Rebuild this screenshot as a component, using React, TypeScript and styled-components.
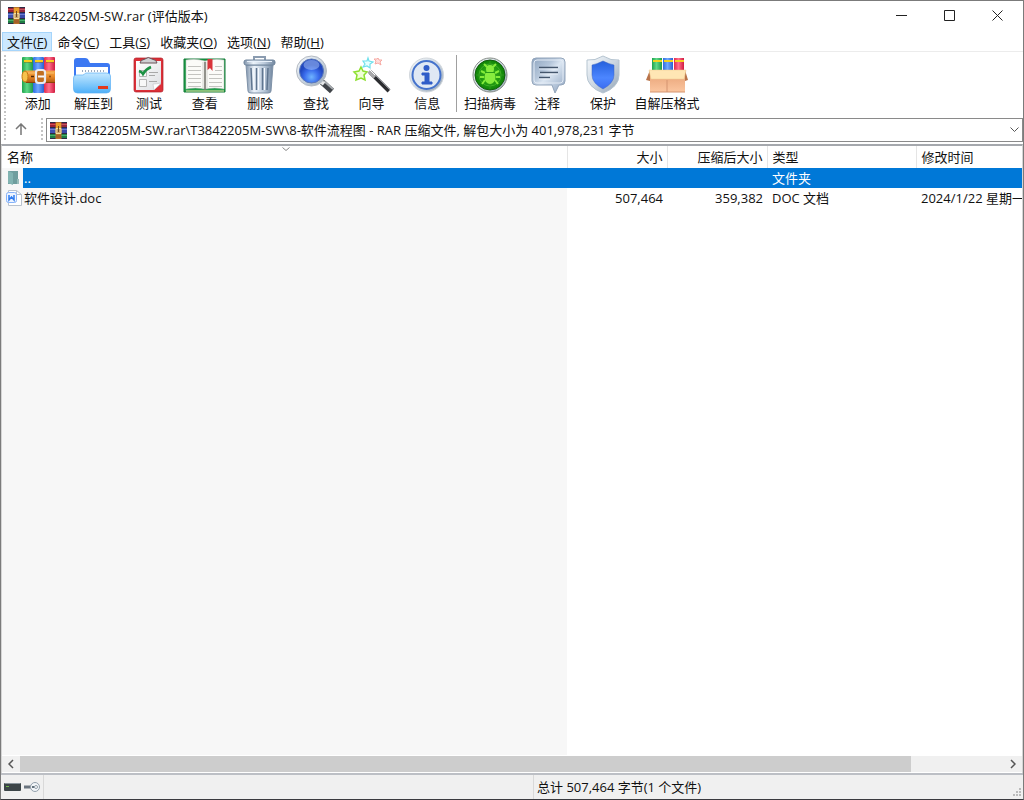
import React from "react";
import styled, { createGlobalStyle } from "styled-components";

const GlobalStyle = createGlobalStyle`
  *, *::before, *::after { box-sizing: border-box; }
  body { margin: 0; background: #fff; }
  body, button, input, table {
    font-family: "Open Sans", "Noto Sans CJK SC", sans-serif;
    font-size: 13px;
    line-height: 20px;
    color: #111;
  }
  button { border: 0; padding: 0; background: transparent; }
  svg { display: block; flex: none; }
`;

const Window = styled.div`
  display: flex;
  flex-direction: column;
  height: 100vh;
  min-height: 320px;
  overflow: hidden;
  border: 1px solid #7b7b7b;
  border-bottom-color: #3a3a3f;
  background: #fff;
`;

const TitleBar = styled.header`
  display: flex;
  align-items: center;
  flex: none;
  height: 31px;
  padding: 0 2px 2px 7px;
`;

const Title = styled.h1`
  flex: 1;
  margin: 0 0 0 4px;
  font-size: 13px;
  font-weight: 400;
  line-height: 20px;
  white-space: nowrap;
`;

const CaptionButton = styled.button`
  display: grid;
  place-items: center;
  width: 48px;
  height: 29px;
`;

const MenuBar = styled.nav`
  display: flex;
  flex: none;
  height: 20px;
  padding-left: 1px;
  border-bottom: 1px solid #ececec;
`;

const MenuButton = styled.button<{ $active?: boolean }>`
  height: 19px;
  padding: 2px 5px 0;
  line-height: 17px;
  white-space: nowrap;
  background: ${(p) => (p.$active ? "#cce8ff" : "transparent")};
  box-shadow: ${(p) => (p.$active ? "inset 0 0 0 1px #a6d5fb" : "none")};
`;

const Grip = styled.span`
  flex: none;
  width: 2px;
  background: repeating-linear-gradient(#c4c4c4 0 2px, transparent 2px 4px);
`;

const ToolBar = styled.div`
  display: flex;
  flex: none;
  height: 64px;
  padding: 3px 0 0 3px;
`;

const MainTools = styled.div`
  display: grid;
  grid-template-columns: repeat(8, 1fr);
  width: 445px;
  margin-left: 4px;
`;

const ToolDivider = styled.span`
  width: 1px;
  height: 57px;
  margin: 0 4px 0 1px;
  background: #a0a0a0;
`;

const ToolButton = styled.button`
  display: flex;
  flex-direction: column;
  align-items: center;
  line-height: 16px;
  white-space: nowrap;
`;

const ExtraTools = styled.div`
  display: grid;
  grid-template-columns: 58px 56px 56px 72px;
`;

const AddressRow = styled.div`
  display: flex;
  flex: none;
  height: 28px;
  padding: 2px 0 2px 3px;
`;

const UpButton = styled.button`
  display: grid;
  place-items: center;
  width: 35px;
  height: 22px;
  padding-right: 6px;
`;

const AddressBox = styled.label`
  display: flex;
  align-items: center;
  flex: 1;
  min-width: 0;
  height: 24px;
  margin-left: 3px;
  padding: 0 3px 0 3px;
  border: 1px solid #8a8a8a;
`;

const AddressInput = styled.input`
  flex: 1;
  min-width: 0;
  height: 20px;
  margin-left: 3px;
  padding: 0;
  border: 0;
  outline: 0;
  background: transparent;
`;

const FilePane = styled.main`
  display: flex;
  flex-direction: column;
  flex: 1;
  min-height: 0;
  border-top: 2px solid #a5a8ad;
  border-left: 1px solid #d5d5d5;
  border-right: 1px solid #d5d5d5;
`;

const TableArea = styled.div`
  position: relative;
  flex: 1;
  min-height: 0;
  overflow: hidden;
`;

const FileTable = styled.table`
  width: 100%;
  height: 100%;
  table-layout: fixed;
  border-collapse: collapse;
`;

const Column = styled.col<{ $width?: number }>`
  width: ${(p) => (p.$width ? `${p.$width}px` : "auto")};
`;

const HeadCell = styled.th<{ $right?: boolean }>`
  height: 22px;
  padding: 0 4px 0 5px;
  border-right: 1px solid #e5e5e5;
  font-weight: 400;
  text-align: ${(p) => (p.$right ? "right" : "left")};
  white-space: nowrap;
  &:last-child { border-right: 0; }
`;

const Row = styled.tr<{ $selected?: boolean }>`
  height: 20px;
  color: ${(p) => (p.$selected ? "#fff" : "#111")};
  td:nth-child(n + 2) {
    background: ${(p) => (p.$selected ? "#0078d7" : "transparent")};
  }
`;

const Cell = styled.td<{ $right?: boolean }>`
  height: 20px;
  padding: 0 4px 0 5px;
  text-align: ${(p) => (p.$right ? "right" : "left")};
  white-space: nowrap;
`;

const NameCell = styled.td`
  height: 20px;
  padding: 0;
  background: #f7f7f7;
`;

const NameContent = styled.div`
  display: flex;
  align-items: center;
  height: 20px;
  padding-left: 3px;
`;

const NameText = styled.span<{ $selected?: boolean }>`
  flex: 1;
  height: 20px;
  padding-left: 1px;
  background: ${(p) => (p.$selected ? "#0078d7" : "transparent")};
`;

const Filler = styled.td`
  background: #f7f7f7;
`;

const SortMark = styled.svg`
  position: absolute;
  top: 0;
  left: 280px;
`;

const ScrollBar = styled.div`
  display: grid;
  grid-template-columns: 18px 1fr 18px;
  flex: none;
  height: 18px;
  border-top: 1px solid #fff;
  border-bottom: 1px solid #fff;
  background: #f0f0f0;
`;

const ScrollButton = styled.button`
  display: grid;
  place-items: center;
`;

const Thumb = styled.div`
  height: 100%;
  background: #cdcdcd;
`;

const StatusBar = styled.footer`
  display: grid;
  grid-template-columns: 43px 490px 1fr auto;
  flex: none;
  height: 26px;
  border-top: 2px solid #bcbfc5;
  background: #f0f0f0;
`;

const StatusPane = styled.div`
  display: flex;
  align-items: center;
  gap: 2px;
  padding-left: 3px;
  border-right: 1px solid #d9d9d9;
  white-space: nowrap;
  &:nth-child(n + 3) { border-right: 0; }
`;

const ResizeCorner = styled.svg`
  align-self: end;
`;

const BookStack = () => (
  <svg width="17" height="17" viewBox="0 0 17 17" aria-hidden="true">
    <path d="M0 0h17v17H0z" fill="#2c2a45" />
    <path d="M0 1h6v4H0z" fill="#9c2136" />
    <path d="M0 2h6v1H0z" fill="#cf4a50" />
    <path d="M11 1h6v4h-6z" fill="#96283e" />
    <path d="M11 2h6v1h-6z" fill="#c4545e" />
    <path d="M0 6h6v5H0z" fill="#3f51b0" />
    <path d="M0 7h6v1H0z" fill="#7084d6" />
    <path d="M11 6h6v5h-6z" fill="#3a4aa8" />
    <path d="M11 7h6v1h-6z" fill="#6b7dd0" />
    <path d="M0 12h6v4H0z" fill="#1f7d45" />
    <path d="M0 13h6v1H0z" fill="#48b06a" />
    <path d="M11 12h6v4h-6z" fill="#1f7d45" />
    <path d="M11 13h6v1h-6z" fill="#48b06a" />
    <path d="M5.500 0h6v17h-6z" fill="#b8742a" />
    <path d="M6 1h5v5H6z" fill="#eaa02c" />
    <path d="M6 6.500h5v5H6z" fill="#c9a46a" stroke="#f3e0a0" />
    <path d="M8 4h1v6H8z" fill="#6e4a24" />
    <path d="M6 13h5v3H6z" fill="#a5602a" />
  </svg>
);

const Art = ({ children }: { children: React.ReactNode }) => (
  <svg width="44" height="40" viewBox="0 0 44 40" aria-hidden="true">{children}</svg>
);

const Definitions = styled.svg`
  position: absolute;
`;

const Gradients = () => (
  <Definitions width="0" height="0" aria-hidden="true">
    <defs>
      <linearGradient id="green"><stop offset="0" stopColor="#1fa34c" /><stop offset=".45" stopColor="#5fd887" /><stop offset="1" stopColor="#1f9a4a" /></linearGradient>
      <linearGradient id="blue"><stop offset="0" stopColor="#2d6be0" /><stop offset=".45" stopColor="#6fa8ff" /><stop offset="1" stopColor="#2a60d0" /></linearGradient>
      <linearGradient id="red"><stop offset="0" stopColor="#e02a4c" /><stop offset=".45" stopColor="#ff6f8c" /><stop offset="1" stopColor="#d01c40" /></linearGradient>
      <linearGradient id="belt" x2="0" y2="1"><stop offset="0" stopColor="#f5a848" /><stop offset=".5" stopColor="#e98a28" /><stop offset="1" stopColor="#b3590e" /></linearGradient>
      <linearGradient id="folder" x2="0" y2="1"><stop offset="0" stopColor="#c4e8ff" /><stop offset="1" stopColor="#4fb0f8" /></linearGradient>
      <linearGradient id="page" x2="1" y2="1"><stop offset="0" stopColor="#fff" /><stop offset="1" stopColor="#dcdee2" /></linearGradient>
      <linearGradient id="steel"><stop offset="0" stopColor="#7f93ab" /><stop offset=".3" stopColor="#edf4fb" /><stop offset=".65" stopColor="#bccbdc" /><stop offset="1" stopColor="#71869f" /></linearGradient>
      <linearGradient id="silver" x2="1" y2="1"><stop offset="0" stopColor="#f7fafc" /><stop offset=".5" stopColor="#ccd7e2" /><stop offset="1" stopColor="#93a3b4" /></linearGradient>
      <linearGradient id="bubble" x2="1" y2="1"><stop offset="0" stopColor="#8fa5c0" /><stop offset=".35" stopColor="#b5c6da" /><stop offset=".5" stopColor="#dbe6f2" /><stop offset="1" stopColor="#8aa0bd" /></linearGradient>
      <linearGradient id="shield" x2="0" y2="1"><stop offset="0" stopColor="#2560dc" /><stop offset=".6" stopColor="#4c86ff" /><stop offset="1" stopColor="#3a6cf0" /></linearGradient>
      <linearGradient id="box" x2="0" y2="1"><stop offset="0" stopColor="#e59d70" /><stop offset="1" stopColor="#fbc6a0" /></linearGradient>
      <radialGradient id="lens" cx=".5" cy=".75"><stop offset="0" stopColor="#6fb4ff" /><stop offset=".6" stopColor="#3a6cec" /><stop offset="1" stopColor="#2148c0" /></radialGradient>
      <radialGradient id="scan"><stop offset="0" stopColor="#3fc01c" /><stop offset="1" stopColor="#0e8208" /></radialGradient>
    </defs>
  </Definitions>
);

const AddIcon = () => (
  <Art>
    <rect x="6" y="2" width="11" height="36" rx="1" fill="url(#green)" />
    <rect x="17" y="2" width="11" height="36" rx="1" fill="url(#blue)" />
    <rect x="28" y="2" width="11" height="36" rx="1" fill="url(#red)" />
    <path d="M8 6h8M19 6h8M30 6h8" stroke="#f9cf1c" strokeWidth="2" />
    <path d="M8 7.500h8M19 7.500h8M30 7.500h8" stroke="#8a6a18" strokeWidth=".5" />
    <path d="M10 15.500h29v12H10q-4-1-4-6t4-6" fill="url(#belt)" />
    <path d="M10 27.500h29" stroke="#8a4208" />
    <ellipse cx="9" cy="21.500" rx="3" ry="5.500" fill="#f7c24c" stroke="#c47a14" />
    <path d="M12 18h26" stroke="#ffcf85" strokeWidth=".7" />
    <rect x="20" y="15" width="9" height="13" rx="2.500" fill="#c06f22" stroke="#e9ebf0" strokeWidth="2.200" />
    <path d="M22 21.500h6" stroke="#fafafa" strokeWidth="2" />
    <path d="M15 21.500h3" stroke="#4a2608" strokeWidth="1.500" />
    <circle cx="34" cy="21.500" r="1" fill="#8a4a10" />
  </Art>
);

const ExtractIcon = () => (
  <Art>
    <path d="M3 33V6q0-3 3-3h8q3 0 4 3l1 2h17q3 0 3 3v22z" fill="#3c78f2" />
    <path d="M5 12h32v16H5z" fill="#fff" />
    <path d="M11 16h23" stroke="#9cabc0" strokeDasharray="1 2" strokeWidth="2" />
    <path d="M2.500 23q0-3 3-3h6q2 0 3-2h21q4 0 4 3v13q0 4-4 4h-29q-4 0-4-4z" fill="url(#folder)" stroke="#5cb0f5" strokeWidth=".7" />
    <rect x="27" y="31" width="10" height="3" fill="#e23a1e" />
  </Art>
);

const TestIcon = () => (
  <Art>
    <rect x="7" y="3" width="29" height="34" rx="2" fill="#dc3038" stroke="#b3202a" strokeWidth=".7" />
    <path d="M9 6h25v23l-7 6H9z" fill="url(#page)" />
    <path d="M34 28q-4 1-8 1l1 6z" fill="#fff" stroke="#b6b8bc" strokeWidth=".5" />
    <path d="M13 8q0-3 5-4 3-3 7 0 5 1 5 4z" fill="#cfd0d4" stroke="#6a5258" />
    <path d="M12.500 15.500h7v6h-7zM12.500 24.500h7v7h-7z" fill="#f8f8f8" stroke="#b5b5b5" />
    <path d="M12 16q3 1 4 3 3-5 8-7" fill="none" stroke="#1c9144" strokeWidth="2.500" />
    <path d="M22 17.500h9M22 20.500h6M22 26.500h8" stroke="#a8a8a8" />
  </Art>
);

const ViewIcon = () => (
  <Art>
    <path d="M1 4h41v33H1z" fill="#1f9e48" stroke="#117a36" />
    <path d="M3 5q10-2 19 1v28q-10-2-19 0zM22 6q10-3 19-1v29q-9-2-19 0z" fill="#fbfbf8" stroke="#bbb" strokeWidth=".5" />
    <path d="M3 36h38" stroke="#f5e8b0" />
    <path d="M22 7v28" stroke="#77776f" strokeWidth="1.500" />
    <path d="M20 7v27M24 7v27" stroke="#d5d5d0" />
    <path d="M5 11.500h13M5 15.500h13M5 19.500h13M5 23.500h13M5 27.500h13M5 31.500h13M26 19.500h13M26 23.500h13M26 27.500h13M26 31.500h13M32 11.500h7M32 15.500h7" stroke="#c4c4c0" />
    <path d="M24.500 4h5v12l-2.500-3-2.500 2z" fill="#d9343a" />
  </Art>
);

const DeleteIcon = () => (
  <Art>
    <path d="M16 6V2h11v4" fill="none" stroke="#8b9cb0" strokeWidth="2" />
    <path d="M8 10h27l-2 26q0 2-3 2H13q-3 0-3-2z" fill="url(#steel)" stroke="#7f92a8" />
    <path d="M13 13l1 22M18.500 13v22M24.500 13v22M30 13l-1 22" stroke="#5f758f" strokeWidth="1.500" />
    <path d="M15 13l1 22M20.500 13v22M26.500 13v22" stroke="#f6faff" />
    <rect x="6" y="5" width="31" height="5" rx="2" fill="url(#steel)" stroke="#6f849c" />
    <path d="M9 6.500h25" stroke="#e8f1fb" />
  </Art>
);

const FindIcon = () => (
  <Art>
    <path d="M28 27l10 9" stroke="#3f4348" strokeWidth="6" /><path d="M30 26l9 8" stroke="#a6aaae" strokeWidth="2" />
    <path d="M26 26l4 3" stroke="#e6e8ea" strokeWidth="4" />
    <circle cx="17.500" cy="16" r="15" fill="url(#silver)" stroke="#b4bac2" />
    <circle cx="17.500" cy="16" r="12" fill="url(#lens)" stroke="#5b78b8" />
    <ellipse cx="17.500" cy="10" rx="8" ry="5" fill="#bdd8ff" opacity=".45" />
  </Art>
);

const WizardIcon = () => (
  <Art>
    <path d="M11 12l2 4 4 1-3 3 1 5-4-2-5 2 1-5-3-3 5-1z" fill="#efffd5" stroke="#8de02e" strokeWidth="1.500" />
    <path d="M18 3l1 3 4 1-3 2v4l-3-2-4 1 2-3-2-3h4z" fill="#e6ffff" stroke="#6fe0ec" strokeWidth="1.200" />
    <path d="M28 3l1 2h3l-2 2 1 3-3-2-3 1 1-3-2-2h3z" fill="#ffe0dd" stroke="#f6aaa4" />
    <path d="M20 17l19 19" stroke="#2c2d30" strokeWidth="4" /><path d="M21 16l19 19" stroke="#8b8e94" />
    <path d="M19 16l6 6" stroke="#a8a8aa" strokeWidth="4" /><path d="M20 15l5 5" stroke="#fff" />
  </Art>
);

const InfoIcon = () => (
  <Art>
    <circle cx="21.500" cy="20" r="17" fill="url(#silver)" stroke="#d2d7dc" />
    <circle cx="21.500" cy="20" r="14" fill="#dfe8f4" stroke="#4472cc" strokeWidth="2" />
    <circle cx="21.500" cy="13" r="3" fill="#2f5cc8" />
    <path d="M17 18h7v9h3v2H17v-2h3v-7h-3z" fill="#2f5cc8" stroke="#2f5cc8" />
  </Art>
);

const ScanIcon = () => (
  <Art>
    <circle cx="22" cy="20" r="17" fill="url(#silver)" stroke="#858c86" />
    <circle cx="22" cy="20" r="15" fill="url(#scan)" stroke="#125c0c" />
    <circle cx="22" cy="20" r="11" fill="none" stroke="#3fae28" /><path d="M22 6v28M8 20h28" stroke="#2c951c" />
    <path d="M19 12l-3-3M25 12l3-3M17 18l-4-2M27 18l4-2M16 22h-4M28 22h4M17 25l-3 4M27 25l3 4" stroke="#84eb39" strokeWidth="2" />
    <ellipse cx="22" cy="22" rx="5.500" ry="7" fill="#86ec3e" /><circle cx="22" cy="14" r="4" fill="#86ec3e" />
    <path d="M17 17.500h10" stroke="#299a18" />
  </Art>
);

const CommentIcon = () => (
  <Art>
    <path d="M11 3h25q4 0 4 4v19q0 4-4 4h-2l-4 8-3-8H11q-4 0-4-4V7q0-4 4-4z" fill="url(#bubble)" stroke="#93a5bb" />
    <rect x="9" y="5" width="29" height="23" rx="3" fill="none" stroke="#e3ebf5" />
    <path d="M14 12.500h19M15 17.500h18M14 22.500h11" stroke="#44566c" strokeWidth="1.500" />
    <path d="M14 14h19M15 19h18M14 24h11" stroke="#f2f7fc" strokeWidth=".7" />
  </Art>
);

const ProtectIcon = () => (
  <Art>
    <path d="M22 1q8 5 16 4v15q0 12-16 18Q6 32 6 20V5q8 1 16-4z" fill="url(#silver)" stroke="#b5c4d0" />
    <path d="M22 6q6 3 11 4v10q0 8-11 14-11-6-11-14V10q5-1 11-4z" fill="url(#shield)" stroke="#3f66c0" strokeWidth=".5" />
  </Art>
);

const SfxIcon = () => (
  <Art>
    <path d="M7 3h10v15H7z" fill="url(#green)" /><path d="M18 3h10v15H18z" fill="url(#blue)" /><path d="M29 3h10v15H29z" fill="url(#red)" />
    <path d="M8 6h9M19 6h9M30 6h9" stroke="#f4d21e" strokeWidth="2" />
    <path d="M5 15h35v22H5z" fill="url(#box)" />
    <path d="M5 15l-4 10 4 1zM40 15l3 10-3 1z" fill="#b9744a" />
    <path d="M4 15h37l-2 9H6z" fill="#ffe6b4" stroke="#ecc890" strokeWidth=".5" />
    <path d="M22 25v12M5 37h35" stroke="#d49470" />
  </Art>
);

const mainTools = [
  { label: "添加", Icon: AddIcon }, { label: "解压到", Icon: ExtractIcon },
  { label: "测试", Icon: TestIcon }, { label: "查看", Icon: ViewIcon },
  { label: "删除", Icon: DeleteIcon }, { label: "查找", Icon: FindIcon },
  { label: "向导", Icon: WizardIcon }, { label: "信息", Icon: InfoIcon },
];

const extraTools = [
  { label: "扫描病毒", Icon: ScanIcon }, { label: "注释", Icon: CommentIcon },
  { label: "保护", Icon: ProtectIcon }, { label: "自解压格式", Icon: SfxIcon },
];

const menus = [["文件", "F"], ["命令", "C"], ["工具", "S"], ["收藏夹", "O"], ["选项", "N"], ["帮助", "H"]];

const scrollExtent = "90.5%";

export default function App() {
  return (
    <Window>
      <GlobalStyle />
      <Gradients />
      <TitleBar>
        <BookStack />
        <Title>T3842205M-SW.rar (评估版本)</Title>
        <CaptionButton aria-label="最小化"><svg width="11" height="11"><path d="M0 5.500h11" stroke="#222" /></svg></CaptionButton>
        <CaptionButton aria-label="最大化"><svg width="11" height="11"><path d="M.5.5h10v10H.5z" fill="none" stroke="#222" /></svg></CaptionButton>
        <CaptionButton aria-label="关闭"><svg width="11" height="11"><path d="M.5.5l10 10M10.500.5l-10 10" stroke="#222" /></svg></CaptionButton>
      </TitleBar>
      <MenuBar>
        {menus.map(([name, key], i) => (
          <MenuButton key={key} $active={i === 0}>{name}(<u>{key}</u>)</MenuButton>
        ))}
      </MenuBar>
      <ToolBar>
        <Grip />
        <MainTools>
          {mainTools.map(({ label, Icon }) => <ToolButton key={label}><Icon />{label}</ToolButton>)}
        </MainTools>
        <ToolDivider />
        <ExtraTools>
          {extraTools.map(({ label, Icon }) => <ToolButton key={label}><Icon />{label}</ToolButton>)}
        </ExtraTools>
      </ToolBar>
      <AddressRow>
        <Grip />
        <UpButton aria-label="向上">
          <svg width="12" height="12"><path d="M6 12V1M1 6l5-5 5 5" fill="none" stroke="#777" strokeWidth="1.500" /></svg>
        </UpButton>
        <Grip />
        <AddressBox>
          <BookStack />
          <AddressInput aria-label="地址" readOnly value={"T3842205M-SW.rar\\T3842205M-SW\\8-软件流程图 - RAR 压缩文件, 解包大小为 401,978,231 字节"} />
          <svg width="9" height="6"><path d="M.5.5l4 4 4-4" fill="none" stroke="#555" /></svg>
        </AddressBox>
      </AddressRow>
      <FilePane>
        <TableArea>
          <FileTable>
            <colgroup>
              <Column /><Column $width={100} /><Column $width={100} /><Column $width={149} /><Column $width={106} />
            </colgroup>
            <thead>
              <tr>
                <HeadCell scope="col">名称</HeadCell>
                <HeadCell scope="col" $right>大小</HeadCell>
                <HeadCell scope="col" $right>压缩后大小</HeadCell>
                <HeadCell scope="col">类型</HeadCell>
                <HeadCell scope="col">修改时间</HeadCell>
              </tr>
            </thead>
            <tbody>
              <Row $selected>
                <NameCell>
                  <NameContent>
                    <svg width="18" height="16" viewBox="0 0 18 16" aria-hidden="true">
                      <path d="M3 1h10v13H3z" fill="#6f9e9e" /><path d="M3 1l5 2v12l-5-2z" fill="#82b4b2" /><path d="M12 9h2v5h-2z" fill="#9abebc" />
                    </svg>
                    <NameText $selected>..</NameText>
                  </NameContent>
                </NameCell>
                <Cell /><Cell /><Cell>文件夹</Cell><Cell />
              </Row>
              <Row>
                <NameCell>
                  <NameContent>
                    <svg width="18" height="18" viewBox="0 0 18 18" aria-hidden="true">
                      <path d="M3.500 1.500h8l5 4v11h-13z" fill="#fff" stroke="#b9c2ce" /><path d="M11.500 1.500v4h5" fill="none" stroke="#b9c2ce" />
                      <rect x="1.500" y="3.500" width="10" height="10" rx="2" fill="#edf4ff" stroke="#86b3fa" />
                      <path d="M4 6v5l2.500-3L9 11V6" fill="none" stroke="#2f7cf0" strokeWidth="1.500" />
                    </svg>
                    <NameText>软件设计.doc</NameText>
                  </NameContent>
                </NameCell>
                <Cell $right>507,464</Cell><Cell $right>359,382</Cell><Cell>DOC 文档</Cell><Cell>2024/1/22 星期一</Cell>
              </Row>
              <tr aria-hidden="true"><Filler /><td colSpan={4} /></tr>
            </tbody>
          </FileTable>
          <SortMark width="8" height="6" aria-hidden="true"><path d="M.5 1.500L4 4.500l3.500-3" fill="none" stroke="#888" /></SortMark>
        </TableArea>
        <ScrollBar>
          <ScrollButton aria-label="向左滚动"><svg width="6" height="10"><path d="M5 1L1 5l4 4" fill="none" stroke="#555" strokeWidth="1.500" /></svg></ScrollButton>
          <div><Thumb style={{ width: scrollExtent }} /></div>
          <ScrollButton aria-label="向右滚动"><svg width="6" height="10"><path d="M1 1l4 4-4 4" fill="none" stroke="#555" strokeWidth="1.500" /></svg></ScrollButton>
        </ScrollBar>
      </FilePane>
      <StatusBar>
        <StatusPane>
          <svg width="17" height="10" aria-hidden="true"><rect y="1" width="17" height="8" rx="1" fill="#3c4548" /><path d="M1 1.500h15" stroke="#89949b" /><path d="M2 4.500h3" stroke="#6fb64d" /></svg>
          <svg width="18" height="12" aria-hidden="true"><path d="M1 6h9" stroke="#6a747e" strokeWidth="3" /><circle cx="12" cy="6" r="4.500" fill="#f2f5f8" stroke="#93a0ac" /><path d="M9 6h4" stroke="#63717d" strokeWidth="2" /><circle cx="13" cy="6" r="1.500" fill="#fff" stroke="#93a0ac" /></svg>
        </StatusPane>
        <StatusPane />
        <StatusPane>总计 507,464 字节(1 个文件)</StatusPane>
        <ResizeCorner width="12" height="12" aria-hidden="true"><path d="M8 1h2v2H8zM5 4h2v2H5zM8 4h2v2H8zM2 7h2v2H2zM5 7h2v2H5zM8 7h2v2H8z" fill="#bbb" /></ResizeCorner>
      </StatusBar>
    </Window>
  );
}
